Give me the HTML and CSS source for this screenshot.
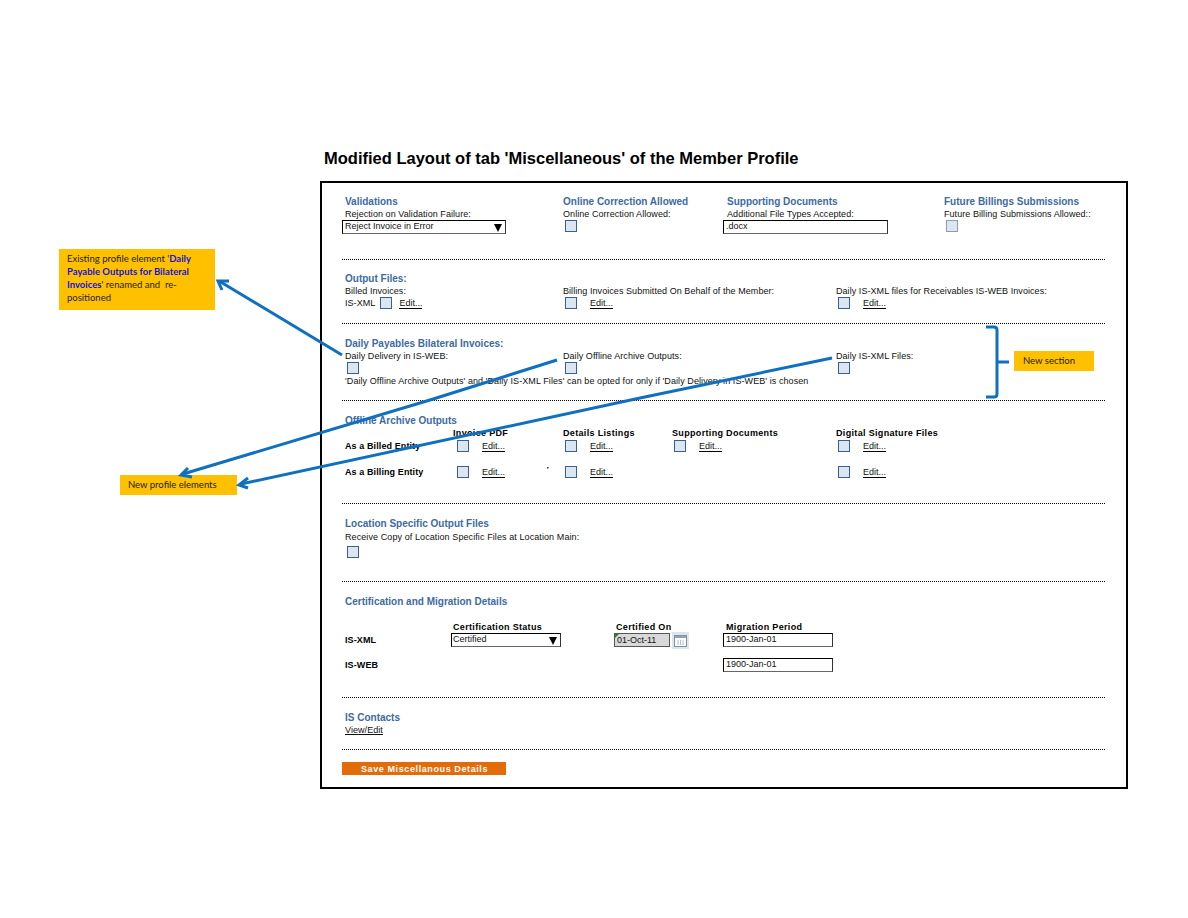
FILE: index.html
```html
<html>
  <head>
    <meta charset="UTF-8" />
    <title>Modified Layout</title>
    <link rel="stylesheet" href="styles.css">
  </head>
  <body>
    <div class="page">
      <h1 class="title">Modified Layout of tab 'Miscellaneous' of the Member Profile</h1>
      <div class="frame">
        <div class="section s1">
          <div class="cols cols1">
            <div>
              <div class="head">Validations</div>
              <div class="lbl">Rejection on Validation Failure:</div>
              <div class="field select wide">Reject Invoice in Error<span class="arrow"></span></div>
            </div>
            <div>
              <div class="head">Online Correction Allowed</div>
              <div class="lbl">Online Correction Allowed:</div>
              <div class="check"></div>
            </div>
            <div>
              <div class="head">Supporting Documents</div>
              <div class="lbl">Additional File Types Accepted:</div>
              <div class="field wide docs">.docx</div>
            </div>
            <div>
              <div class="head">Future Billings Submissions</div>
              <div class="lbl">Future Billing Submissions Allowed::</div>
              <div class="check light"></div>
            </div>
          </div>
        </div>

        <div class="section s2">
          <div class="head">Output Files:</div>
          <div class="cols cols2">
            <div>
              <div class="lbl">Billed Invoices:</div>
              <div class="row"><span class="lbl">IS-XML</span><span class="check"></span><a class="edit short">Edit...</a></div>
            </div>
            <div>
              <div class="lbl">Billing Invoices Submitted On Behalf of the Member:</div>
              <div class="row"><span class="check"></span><a class="edit">Edit...</a></div>
            </div>
            <div>
              <div class="lbl">Daily IS-XML files for Receivables IS-WEB Invoices:</div>
              <div class="row"><span class="check"></span><a class="edit">Edit...</a></div>
            </div>
          </div>
        </div>

        <div class="section s3">
          <div class="head">Daily Payables Bilateral Invoices:</div>
          <div class="cols cols2">
            <div><div class="lbl">Daily Delivery in IS-WEB:</div><div class="check"></div></div>
            <div><div class="lbl">Daily Offline Archive Outputs:</div><div class="check"></div></div>
            <div><div class="lbl">Daily IS-XML Files:</div><div class="check"></div></div>
          </div>
          <div class="lbl note">'Daily Offline Archive Outputs' and 'Daily IS-XML Files' can be opted for only if 'Daily Delivery in IS-WEB' is chosen</div>
        </div>

        <div class="section s4">
          <div class="head">Offline Archive Outputs</div>
          <div class="cols cols4 colhead">
            <div></div>
            <div class="bold">Invoice PDF</div>
            <div class="bold">Details Listings</div>
            <div class="bold">Supporting Documents</div>
            <div class="bold">Digital Signature Files</div>
          </div>
          <div class="cols cols4 entity">
            <div class="bold">As a Billed Entity</div>
            <div class="row first"><span class="check"></span><a class="edit">Edit...</a></div>
            <div class="row"><span class="check"></span><a class="edit">Edit...</a></div>
            <div class="row"><span class="check"></span><a class="edit">Edit...</a></div>
            <div class="row"><span class="check"></span><a class="edit">Edit...</a></div>
          </div>
          <div class="cols cols4 entity">
            <div class="bold">As a Billing Entity</div>
            <div class="row first"><span class="check"></span><a class="edit">Edit...</a></div>
            <div class="row"><span class="check"></span><a class="edit">Edit...</a></div>
            <div></div>
            <div class="row"><span class="check"></span><a class="edit">Edit...</a></div>
          </div>
        </div>

        <div class="section s5">
          <div class="head">Location Specific Output Files</div>
          <div class="lbl spread">Receive Copy of Location Specific Files at Location Main:</div>
          <div class="check spaced"></div>
        </div>

        <div class="section s6">
          <div class="head">Certification and Migration Details</div>
          <div class="cols cols6 colhead">
            <div></div>
            <div class="bold">Certification Status</div>
            <div class="bold">Certified On</div>
            <div class="bold">Migration Period</div>
          </div>
          <div class="cols cols6 cert">
            <div class="bold">IS-XML</div>
            <div><div class="field select status">Certified<span class="arrow"></span></div></div>
            <div class="date-wrap">
              <div class="field date">01-Oct-11</div>
              <svg class="cal" width="17" height="17" viewBox="0 0 17 17">
                <rect width="17" height="17" fill="#dce6f1"/>
                <rect x="2.5" y="3.5" width="12" height="11" fill="#fff" stroke="#7f8fa6"/>
                <rect x="3" y="4" width="11" height="2" fill="#8fa3bd"/>
                <path d="M6 8v5M8.5 8v5M11 8v5" stroke="#b4bfcc"/>
              </svg>
            </div>
            <div><div class="field period">1900-Jan-01</div></div>
          </div>
          <div class="cols cols6 cert web">
            <div class="bold">IS-WEB</div>
            <div></div>
            <div></div>
            <div><div class="field period">1900-Jan-01</div></div>
          </div>
        </div>

        <div class="section s7">
          <div class="head">IS Contacts</div>
          <div class="lbl"><a class="link">View/Edit</a></div>
        </div>

        <button class="save">Save Miscellanous Details</button>
      </div>
    </div>

    <!-- callouts lie over the page -->
    <div class="callout c1">Existing profile element '<b>Daily Payable Outputs for Bilateral Invoices</b>' renamed and&nbsp; re-positioned</div>
    <div class="callout c2">New profile elements</div>
    <div class="callout c3">New section</div>

    <svg class="marks" width="1188" height="918" viewBox="0 0 1188 918">
      <g fill="none" stroke="#0f70bf" stroke-width="3">
        <path d="M342 355 L219 281"/>
        <path d="M222 290 L218 281 L229 281"/>
        <path d="M557 360 L430 400 L183 474"/>
        <path d="M188 468 L181 475 L192 477"/>
        <path d="M832 358 L640 398 L241 484"/>
        <path d="M248 478 L239 485 L248 488"/>
        <path d="M986 327 H994 Q997 327 997 330 V394 Q997 397 994 397 H986"/>
        <path d="M997 362 H1009"/>
      </g>
      <rect x="547" y="467" width="1.5" height="1.5" fill="#1a1ad0"/>
    </svg>
  </body>
</html>
```

FILE: styles.css
```css
body {
  margin: 0;
  background: #fff;
  color: #111;
  font-family: "Liberation Sans", Arial, sans-serif;
  font-size: 9px;
}
.page {
  width: 808px;
  margin-left: 320px;
  padding-top: 149px;
}
.title {
  margin: 0 0 13px 4px;
  font-size: 16.5px;
  line-height: 19px;
  color: #000;
}
.frame {
  box-sizing: border-box;
  height: 608px;
  border: 2px solid #000;
  padding: 0 21px 0 20px;
}

.section {
  box-sizing: border-box;
  border-bottom: 1px dotted #000;
  padding-top: 13px;
}
.s1 { height: 77px; padding-top: 12px; }
.s2 { height: 64px; padding-top: 12px; }
.s3 { height: 77px; }
.s4 { height: 103px; }
.s5 { height: 78px; }
.s6 { height: 116px; }
.s7 { height: 52px; }

.head {
  padding-left: 3px;
  font-size: 10px;
  font-weight: bold;
  line-height: 13px;
  color: #3d6aa3;
  white-space: nowrap;
}
.lbl {
  padding-left: 3px;
  line-height: 12px;
  letter-spacing: 0.06px;
  white-space: nowrap;
}
.bold {
  padding-left: 3px;
  font-weight: bold;
  letter-spacing: 0.1px;
  color: #000;
  white-space: nowrap;
}
.note { margin-top: 1px; letter-spacing: 0.08px; }
.spread { margin-top: 1px; letter-spacing: 0.09px; }

.cols { display: grid; }
.cols1 { grid-template-columns: 218px 164px 217px 1fr; }
.cols2 { grid-template-columns: 218px 273px 1fr; }
.cols4 { grid-template-columns: 108px 110px 109px 164px 1fr; }
.cols6 { grid-template-columns: 108px 163px 110px 1fr; }

.row {
  display: flex;
  align-items: center;
  height: 12px;
}
.row > .check { margin: 0 0 0 5px; }
.first > .check { margin-left: 7px; }

.check {
  display: block;
  box-sizing: border-box;
  width: 12px;
  height: 12px;
  margin-left: 5px;
  background: #dce6f1;
  border: 1px solid #366092;
}
.check.light { border-color: #8a9db5; }
.check.spaced { margin-top: 3px; }

.edit {
  margin-left: 13px;
  line-height: 10px;
  border-bottom: 1px solid #000;
  color: #111;
}
.edit.short { margin-left: 7px; }
.link {
  text-decoration: underline;
}

.field {
  box-sizing: border-box;
  position: relative;
  height: 14px;
  padding-left: 2px;
  line-height: 11px;
  background: #fff;
  border: 1px solid #000;
  border-right-color: #333;
  border-bottom-color: #666;
}
.wide { width: 164px; }
.docs { width: 165px; margin-left: -1px; }
.status { width: 110px; margin-left: 1px; padding-left: 1px; }
.period { width: 110px; }
.select .arrow {
  position: absolute;
  right: 3px;
  top: 3px;
  border-left: 4px solid transparent;
  border-right: 4px solid transparent;
  border-top: 8px solid #000;
}

.date-wrap {
  display: flex;
  align-items: center;
  gap: 2px;
  height: 14px;
}
.date {
  width: 56px;
  margin-left: 1px;
  background: #d9d9d9;
  border-color: #555;
  line-height: 12px;
}
.date::before {
  content: "";
  position: absolute;
  left: 0;
  top: 0;
  border-top: 4px solid #1f8a2e;
  border-right: 4px solid transparent;
}

.colhead { line-height: 12px; }
.colhead .bold { letter-spacing: 0.33px; }
.s6 .colhead { margin-top: 13px; }
.entity { align-items: center; height: 14px; }
.entity + .entity { margin-top: 12px; }
.cert { align-items: center; height: 14px; }
.cert.web { margin-top: 11px; }

.save {
  display: block;
  width: 164px;
  height: 13px;
  margin-top: 12px;
  padding: 0 0 0 19px;
  background: #e36c0a;
  border: 0;
  color: #fff;
  font: bold 9px "Liberation Sans", Arial, sans-serif;
  letter-spacing: 0.6px;
  line-height: 12px;
  text-align: left;
}

.callout {
  position: absolute;
  box-sizing: border-box;
  background: #ffc000;
  color: #222;
  font-family: Lato, "Open Sans", sans-serif;
  font-size: 9.5px;
}
.callout b { color: #1414d4; }
.c1 {
  left: 59px;
  top: 249px;
  width: 156px;
  height: 61px;
  padding: 3px 8px;
  line-height: 13px;
}
.c2 {
  left: 120px;
  top: 475px;
  width: 117px;
  height: 20px;
  padding: 0 8px;
  line-height: 20px;
}
.c3 {
  left: 1014px;
  top: 351px;
  width: 80px;
  height: 20px;
  padding: 0 9px;
  line-height: 20px;
}
.marks {
  position: absolute;
  left: 0;
  top: 0;
  pointer-events: none;
}
```
